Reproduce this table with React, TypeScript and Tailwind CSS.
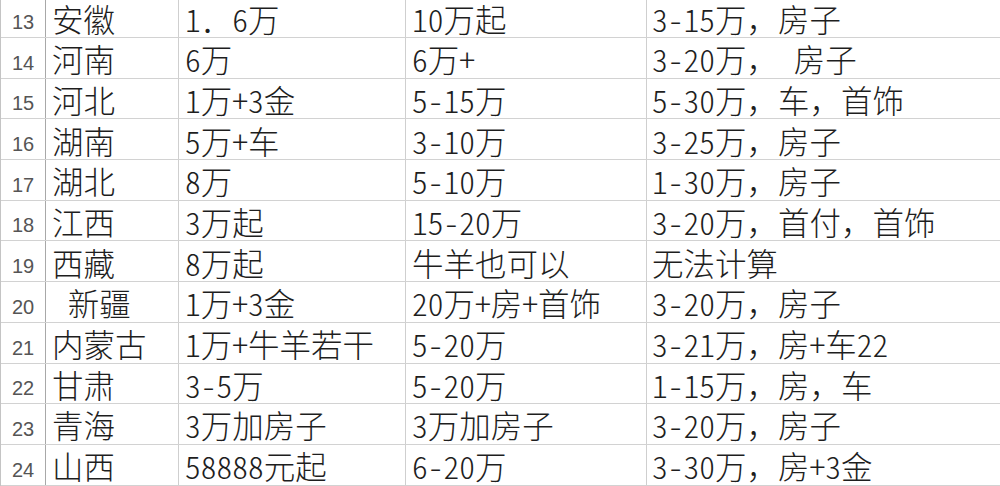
import React from "react";

const rows: [string, string, string, string, string][] = [
  ["13", "安徽", "1．6万", "10万起", "3-15万，房子"],
  ["14", "河南", "6万", "6万+", "3-20万，\u2002房子"],
  ["15", "河北", "1万+3金", "5-15万", "5-30万，车，首饰"],
  ["16", "湖南", "5万+车", "3-10万", "3-25万，房子"],
  ["17", "湖北", "8万", "5-10万", "1-30万，房子"],
  ["18", "江西", "3万起", "15-20万", "3-20万，首付，首饰"],
  ["19", "西藏", "8万起", "牛羊也可以", "无法计算"],
  ["20", "\u2002新疆", "1万+3金", "20万+房+首饰", "3-20万，房子"],
  ["21", "内蒙古", "1万+牛羊若干", "5-20万", "3-21万，房+车22"],
  ["22", "甘肃", "3-5万", "5-20万", "1-15万，房，车"],
  ["23", "青海", "3万加房子", "3万加房子", "3-20万，房子"],
  ["24", "山西", "58888元起", "6-20万", "3-30万，房+3金"],
];

function Txt({ s }: { s: string }) {
  const parts = s.split(/([0-9+\-]+)/).filter((p) => p.length > 0);
  return (
    <span>
      {parts.map((p, i) =>
        /^[0-9+\-]+$/.test(p) ? (
          <span key={i} className="[font-feature-settings:'hwid']">
            {p}
          </span>
        ) : (
          <span key={i}>{p}</span>
        )
      )}
    </span>
  );
}

const cell =
  "flex items-end pb-[3px] text-[31.5px] leading-none text-[#1e1e1e] font-light whitespace-pre font-['Noto_Sans_CJK_SC',sans-serif]";

export default function App() {
  return (
    <div className="w-[1000px] h-[486px] overflow-hidden bg-white">
      <div className="border-l border-[#c4c4c4]">
        {rows.map((r, i) => (
          <div
            key={r[0]}
            className={`flex border-b border-[#d2d2d2] ${i === 0 ? "h-[38px]" : "h-[40.7px]"}`}
          >
            <div className="w-[45px] shrink-0 border-r border-[#a8a8a8] flex items-end justify-center pb-[5px] text-[20px] leading-none text-[#555] font-['Liberation_Sans',sans-serif]">
              {r[0]}
            </div>
            <div className={`w-[133px] shrink-0 border-r border-[#cfcfcf] pl-[6px] ${cell}`}>
              <Txt s={r[1]} />
            </div>
            <div className={`w-[227px] shrink-0 border-r border-[#cfcfcf] pl-[6px] ${cell}`}>
              <Txt s={r[2]} />
            </div>
            <div className={`w-[241px] shrink-0 border-r border-[#cfcfcf] pl-[6px] ${cell}`}>
              <Txt s={r[3]} />
            </div>
            <div className={`flex-1 pl-[5px] ${cell}`}>
              <Txt s={r[4]} />
            </div>
          </div>
        ))}
      </div>
    </div>
  );
}
